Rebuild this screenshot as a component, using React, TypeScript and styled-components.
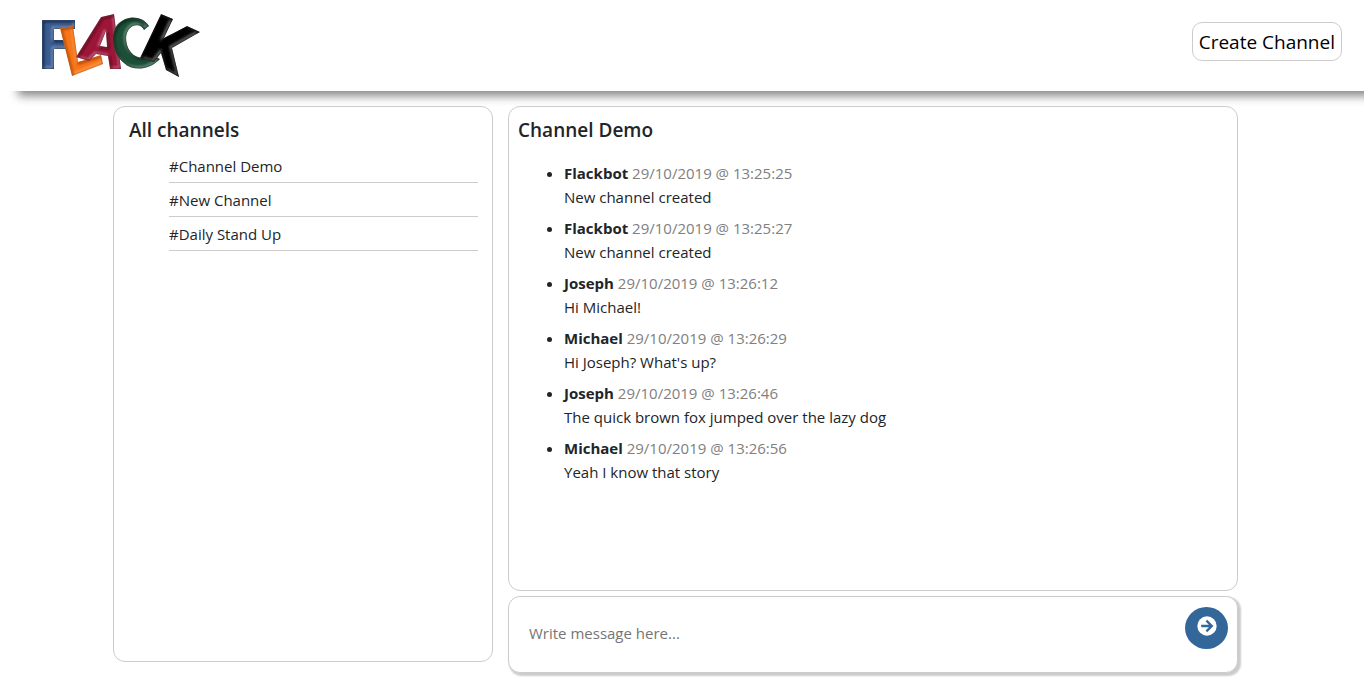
import React from "react";
import styled, { createGlobalStyle } from "styled-components";

const GlobalStyle = createGlobalStyle`
  * { box-sizing: border-box; }
  body {
    margin: 0;
    background: #fff;
    color: #212529;
    font-family: "Segoe UI", "Open Sans", "Noto Sans", sans-serif;
    font-size: 15px;
    line-height: 24px;
  }
  button, input { font: inherit; color: inherit; }
`;

const Header = styled.header`
  display: flex;
  justify-content: space-between;
  align-items: flex-start;
  height: 91px;
  padding: 0 22px 0 30px;
  background: #fff;
  box-shadow: 18px 5px 9px #888;
`;

const LogoLink = styled.a`
  display: block;
  padding-top: 5px;
  svg { display: block; }
`;

const CreateButton = styled.button`
  height: 39px;
  margin-top: 22px;
  padding: 0 6px;
  border: 1px solid #ccc;
  border-radius: 10px;
  background: #fff;
  color: #000;
  font-size: 19px;
`;

const Board = styled.main`
  display: grid;
  grid-template-columns: 380fr 730fr;
  align-items: start;
  gap: 15px;
  max-width: 1140px;
  margin: 15px auto 0;
  padding: 0 14px 18px 1px;
`;

const Panel = styled.section<{ $height: string; $inset: number }>`
  min-height: ${(p) => p.$height};
  padding: 11px 14px 0 ${(p) => p.$inset}px;
  border: 1px solid #ccc;
  border-radius: 12px;
  background: #fff;
`;

const Title = styled.h1`
  margin: 0;
  font-size: 19px;
  font-weight: 600;
  line-height: 24px;
`;

const ChannelList = styled.ul`
  margin: 7px 0 0;
  padding: 0 0 0 40px;
  list-style: none;
`;

const ChannelItem = styled.li`
  height: 34px;
  padding-top: 5px;
  border-bottom: 1px solid #ccc;
`;

const ChannelLink = styled.a`
  color: inherit;
  text-decoration: none;
`;

const Column = styled.div`
  display: grid;
  gap: 5px;
`;

const MessageList = styled.ul`
  margin: 19px 0 0;
  padding: 0 0 0 46px;
`;

const Message = styled.li`
  margin-bottom: 7px;
`;

const Stamp = styled.time`
  color: #808080;
`;

const Text = styled.p`
  margin: 0;
`;

const Composer = styled.form`
  display: flex;
  align-items: flex-start;
  height: 77px;
  padding: 10px 9px 10px 20px;
  border: 1px solid #ccc;
  border-radius: 12px;
  background: #fff;
  box-shadow: 2px 2px 2px 1px #ccc;
`;

const MessageInput = styled.input`
  flex: 1;
  min-width: 0;
  height: 52px;
  padding: 0;
  border: 0;
  outline: 0;
  background: transparent;
  &::placeholder { color: #757575; opacity: 1; }
`;

const SendButton = styled.button`
  display: grid;
  justify-items: center;
  width: 43px;
  height: 42px;
  padding: 9px 0 0;
  border: 0;
  border-radius: 50%;
  background: #336699;
`;

const channels = ["#Channel Demo", "#New Channel", "#Daily Stand Up"];

const messages = [
  { user: "Flackbot", time: "29/10/2019 @ 13:25:25", text: "New channel created" },
  { user: "Flackbot", time: "29/10/2019 @ 13:25:27", text: "New channel created" },
  { user: "Joseph", time: "29/10/2019 @ 13:26:12", text: "Hi Michael!" },
  { user: "Michael", time: "29/10/2019 @ 13:26:29", text: "Hi Joseph? What's up?" },
  { user: "Joseph", time: "29/10/2019 @ 13:26:46", text: "The quick brown fox jumped over the lazy dog" },
  { user: "Michael", time: "29/10/2019 @ 13:26:56", text: "Yeah I know that story" },
];

const strokes = [
  { id: "f", base: "#3a5c91", light: "#8fa9d0", dark: "#10233f", d: "M12 15H45V24H24V35H39V44H24V64H12Z" },
  { id: "l", base: "#f97619", light: "#ffa869", dark: "#a84300", d: "M30 23L43 21L48 57L71 50L73 59L42 71Z" },
  { id: "a", base: "#9b1438", light: "#d67f95", dark: "#5a091f", d: "M46 52L71 12L84 9L91 64L80 64L78 51L66 49L59 56ZM70 41L77 42L76 26Z" },
  { id: "c", base: "#1f4f38", light: "#84aa97", dark: "#0a2417", d: "M119 21C112 10 96 10 87 20C79 31 83 50 94 58C102 66 119 66 130 54L120 49C113 55 105 53 100 46C94 37 95 25 103 21C108 19 112 21 114 25Z" },
  { id: "k", base: "#050505", light: "#8c8c8c", dark: "#000", d: "M131 9L143 14L134 33L157 21L170 27L142 43L149 72L136 65L131 48L124 57L110 53Z" },
];

function Logo() {
  return (
    <svg width="180" height="80" viewBox="0 0 180 80" role="img" aria-label="Flack">
      <defs>
        {strokes.map((s) => (
          <clipPath id={"clip-" + s.id} key={s.id}><path d={s.d} clipRule="evenodd" /></clipPath>
        ))}
        <filter id="bevel" x="-20%" y="-20%" width="140%" height="140%"><feGaussianBlur stdDeviation="1.3" /></filter>
        <filter id="edge"><feGaussianBlur stdDeviation="0.5" /></filter>
      </defs>
      {strokes.map((s) => (
        <g key={s.id} filter="url(#edge)">
          <g clipPath={`url(#clip-${s.id})`}>
            <path d={s.d} fill={s.base} fillRule="evenodd" />
            <path d={s.d} fill="none" stroke={s.light} strokeWidth="3" transform="translate(-1 -1)" filter="url(#bevel)" opacity="0.7" />
            <path d={s.d} fill="none" stroke={s.dark} strokeWidth="3" transform="translate(1 1)" filter="url(#bevel)" opacity="0.8" />
          </g>
        </g>
      ))}
    </svg>
  );
}

function ArrowIcon() {
  return (
    <svg width="20" height="20" viewBox="0 0 20 20" aria-hidden="true">
      <circle cx="10" cy="10" r="9.7" fill="#fff" />
      <path d="M4.2 10H14.5M9.4 4.6L14.8 10L9.4 15.4" fill="none" stroke="#336699" strokeWidth="2.3" />
    </svg>
  );
}

export default function App() {
  return (
    <>
      <GlobalStyle />
      <Header>
        <LogoLink href="#"><Logo /></LogoLink>
        <CreateButton type="button">Create Channel</CreateButton>
      </Header>
      <Board>
        <Panel $height="calc(80vh + 2px)" $inset={15}>
          <Title>All channels</Title>
          <ChannelList>
            {channels.map((name) => (
              <ChannelItem key={name}><ChannelLink href="#">{name}</ChannelLink></ChannelItem>
            ))}
          </ChannelList>
        </Panel>
        <Column>
          <Panel $height="calc(70vh + 1px)" $inset={9}>
            <Title as="h2">Channel Demo</Title>
            <MessageList>
              {messages.map((m) => (
                <Message key={m.time}>
                  <strong>{m.user}</strong> <Stamp>{m.time}</Stamp>
                  <Text>{m.text}</Text>
                </Message>
              ))}
            </MessageList>
          </Panel>
          <Composer onSubmit={(e) => e.preventDefault()}>
            <MessageInput type="text" placeholder="Write message here..." aria-label="Write message" />
            <SendButton type="submit" aria-label="Send"><ArrowIcon /></SendButton>
          </Composer>
        </Column>
      </Board>
    </>
  );
}
